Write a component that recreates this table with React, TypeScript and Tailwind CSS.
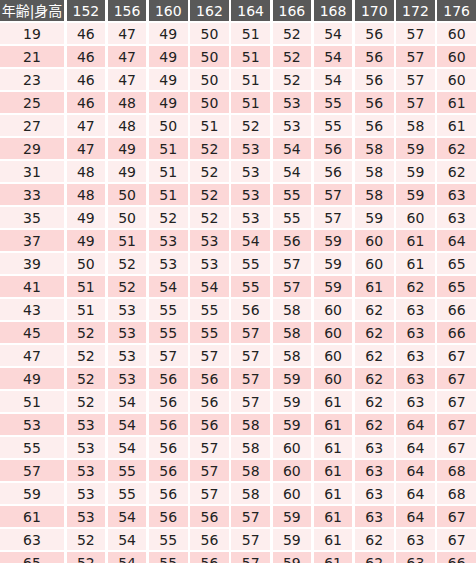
const heights = [152, 156, 160, 162, 164, 166, 168, 170, 172, 176];

const rows: [number, number[]][] = [
  [19, [46, 47, 49, 50, 51, 52, 54, 56, 57, 60]],
  [21, [46, 47, 49, 50, 51, 52, 54, 56, 57, 60]],
  [23, [46, 47, 49, 50, 51, 52, 54, 56, 57, 60]],
  [25, [46, 48, 49, 50, 51, 53, 55, 56, 57, 61]],
  [27, [47, 48, 50, 51, 52, 53, 55, 56, 58, 61]],
  [29, [47, 49, 51, 52, 53, 54, 56, 58, 59, 62]],
  [31, [48, 49, 51, 52, 53, 54, 56, 58, 59, 62]],
  [33, [48, 50, 51, 52, 53, 55, 57, 58, 59, 63]],
  [35, [49, 50, 52, 52, 53, 55, 57, 59, 60, 63]],
  [37, [49, 51, 53, 53, 54, 56, 59, 60, 61, 64]],
  [39, [50, 52, 53, 53, 55, 57, 59, 60, 61, 65]],
  [41, [51, 52, 54, 54, 55, 57, 59, 61, 62, 65]],
  [43, [51, 53, 55, 55, 56, 58, 60, 62, 63, 66]],
  [45, [52, 53, 55, 55, 57, 58, 60, 62, 63, 66]],
  [47, [52, 53, 57, 57, 57, 58, 60, 62, 63, 67]],
  [49, [52, 53, 56, 56, 57, 59, 60, 62, 63, 67]],
  [51, [52, 54, 56, 56, 57, 59, 61, 62, 63, 67]],
  [53, [53, 54, 56, 56, 58, 59, 61, 62, 64, 67]],
  [55, [53, 54, 56, 57, 58, 60, 61, 63, 64, 67]],
  [57, [53, 55, 56, 57, 58, 60, 61, 63, 64, 68]],
  [59, [53, 55, 56, 57, 58, 60, 61, 63, 64, 68]],
  [61, [53, 54, 56, 56, 57, 59, 61, 63, 64, 67]],
  [63, [52, 54, 55, 56, 57, 59, 61, 62, 63, 67]],
  [65, [52, 54, 55, 56, 57, 59, 61, 62, 63, 66]],
];

const App = () => {
  return (
    <div className="w-[476px] h-[563px] overflow-hidden bg-white font-['DejaVu_Sans','Noto_Sans_CJK_JP',sans-serif] text-[14px] leading-none">
      <div className="grid grid-cols-[64px_repeat(10,minmax(0,1fr))] gap-x-[2.5px] gap-y-[2px]">
        <div className="h-[21px] bg-[#595959] text-white flex items-center justify-center whitespace-nowrap">
          年齢|身高
        </div>
        {heights.map((h) => (
          <div
            key={h}
            className="h-[21px] bg-[#595959] text-white flex items-center justify-center"
          >
            {h}
          </div>
        ))}

        {rows.map(([age, weights], i) => {
          const bg = i % 2 === 0 ? "bg-[#fdeeee]" : "bg-[#fcd7d7]";
          return [
            <div
              key={`a${age}`}
              className={`h-[21px] ${bg} text-[#222] flex items-center justify-center pt-px`}
            >
              {age}
            </div>,
            ...weights.map((w, j) => (
              <div
                key={`${age}-${j}`}
                className={`h-[21px] ${bg} text-[#222] flex items-center justify-center pt-px`}
              >
                {w}
              </div>
            )),
          ];
        })}
      </div>
    </div>
  );
};

export default App;
